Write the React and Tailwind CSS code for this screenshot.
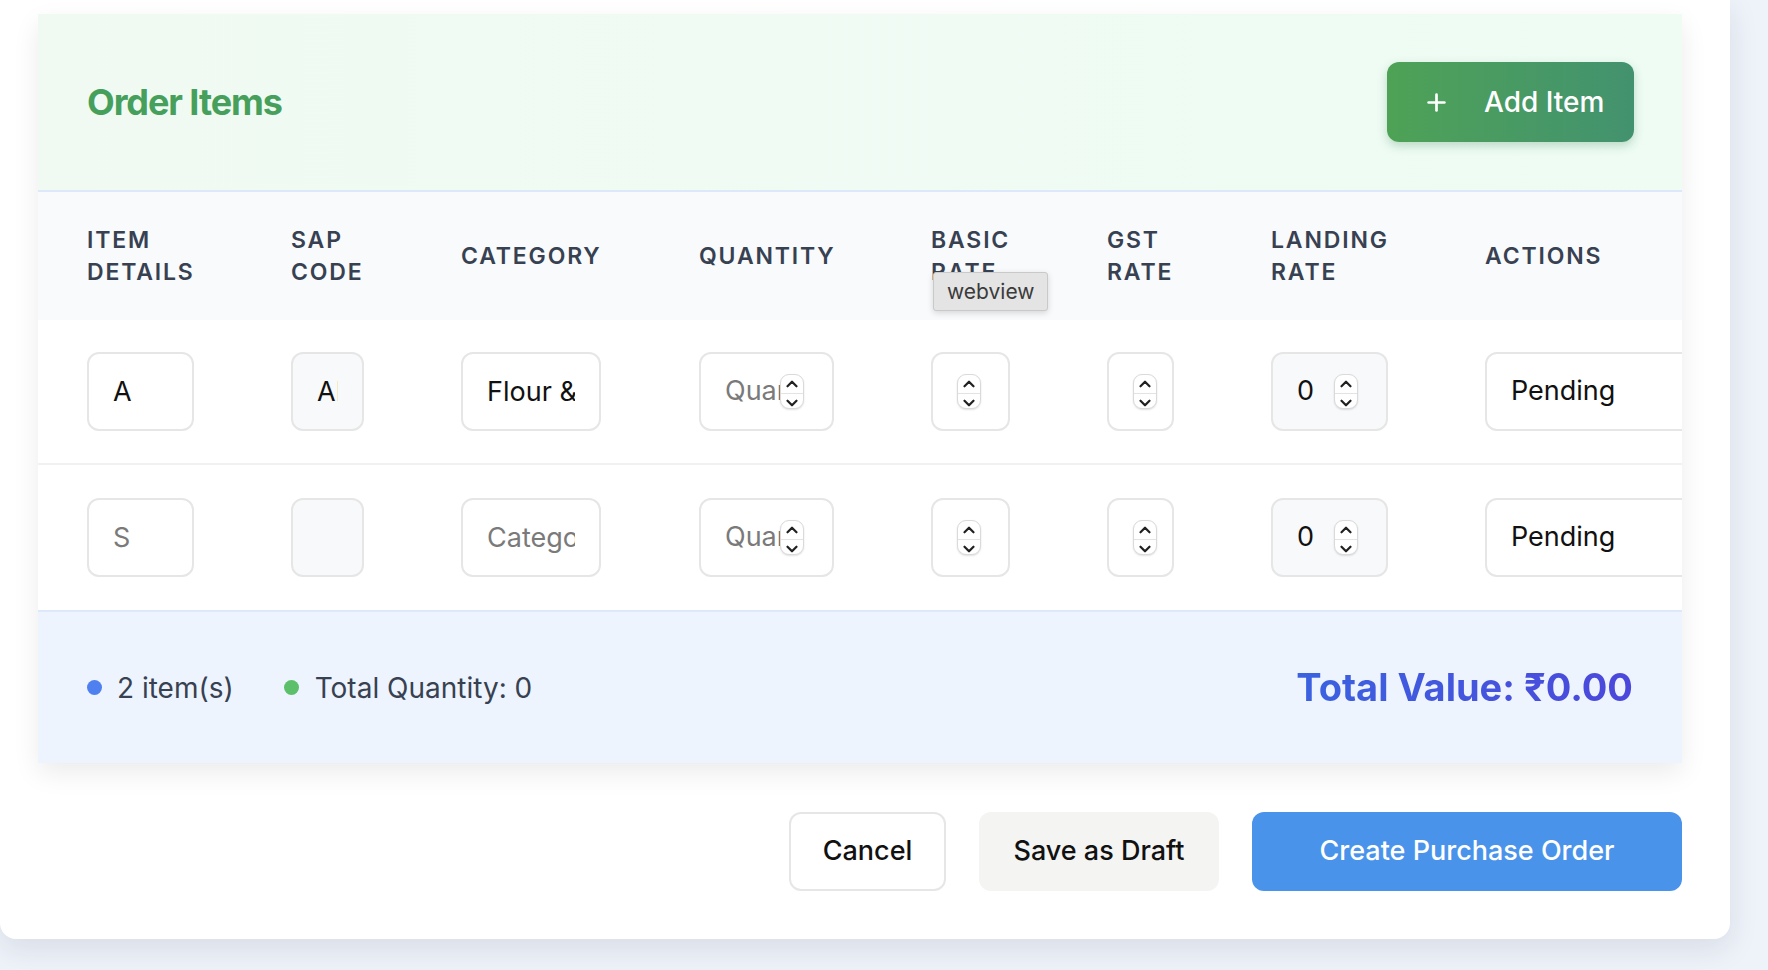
import { Plus, ChevronUp, ChevronDown } from 'lucide-react';

const headers = [
  'ITEM\nDETAILS',
  'SAP\nCODE',
  'CATEGORY',
  'QUANTITY',
  'BASIC\nRATE',
  'GST\nRATE',
  'LANDING\nRATE',
  'ACTIONS',
];

const rows = [
  { item: 'A', sap: 'AB1029', category: 'Flour & Grains', landing: '0' },
  { item: '', sap: '', category: '', landing: '0' },
];

const inputBase =
  'h-[79px] rounded-[12px] border-2 border-[#e6e6e6] px-[24px] text-[27px] text-[#111] placeholder:text-[#7a7a7a] outline-none';

function Spinner() {
  return (
    <div className="flex h-[35px] w-[24px] shrink-0 flex-col overflow-hidden rounded-[9px] border border-[#dadada] bg-white shadow-[0_1px_2px_rgba(0,0,0,0.12)]">
      <div className="flex flex-1 items-center justify-center border-b border-[#e3e3e3]">
        <ChevronUp size={18} strokeWidth={3} className="text-[#222]" />
      </div>
      <div className="flex flex-1 items-center justify-center">
        <ChevronDown size={18} strokeWidth={3} className="text-[#222]" />
      </div>
    </div>
  );
}

function NumberField({ width, value, placeholder, muted }) {
  return (
    <div
      className={`flex h-[79px] items-center rounded-[12px] border-2 border-[#e6e6e6] pl-[24px] pr-[28px] ${width} ${
        muted ? 'bg-[#f8f9fa]' : 'bg-white'
      }`}
    >
      <input
        readOnly
        value={value}
        placeholder={placeholder}
        className="w-0 min-w-0 flex-1 bg-transparent text-[27px] text-[#111] outline-none placeholder:text-[#7a7a7a]"
      />
      <Spinner />
    </div>
  );
}

const grid =
  'grid grid-cols-[204px_170px_238px_232px_176px_164px_214px_300px]';

export default function App() {
  return (
    <div className="min-h-screen bg-[#eef2f9] font-[Inter,'Liberation_Sans',sans-serif]">
      <div className="w-[1730px] rounded-b-2xl bg-white pl-[38px] pr-[48px] pt-[14px] pb-[48px] shadow-[0_10px_30px_rgba(30,41,59,0.10)]">
        {/* Order items panel */}
        <div className="overflow-hidden bg-white shadow-[0_10px_25px_rgba(0,0,0,0.08)]">
          {/* Header */}
          <div className="flex h-[178px] items-center justify-between border-b-2 border-[#dde8fa] bg-gradient-to-r from-[#f0faf3] to-[#eefcf4] pl-[49px] pr-[48px]">
            <h2 className="text-[36px] font-bold tracking-[-0.03em] text-[#46a05c]">Order Items</h2>
            <button className="flex h-[80px] w-[247px] items-center gap-[34px] rounded-[12px] bg-gradient-to-r from-[#4ea255] to-[#43926f] pl-[36px] text-[28px] font-medium text-white shadow-[0_4px_10px_rgba(34,120,60,0.25)]">
              <Plus size={27} strokeWidth={2.4} />
              Add Item
            </button>
          </div>

          {/* Table */}
          <div className="overflow-hidden">
            <div className={`${grid} h-[128px] w-max bg-[#f8fafc]`}>
              {headers.map((h, i) => (
                <div key={h} className="relative flex items-center pl-[49px]">
                  <span className="whitespace-pre-line text-[23px] font-semibold leading-[32px] tracking-[0.08em] text-[#374151]">
                    {h}
                  </span>
                  {i === 4 && (
                    <div className="absolute left-[51px] top-[80px] z-10 flex h-[39px] items-center rounded-[3px] border border-[#c9c9c9] bg-[#e4e4e4] px-[13px] text-[21px] text-[#3b3b3b] shadow-[0_2px_6px_rgba(0,0,0,0.15)]">
                      webview
                    </div>
                  )}
                </div>
              ))}
            </div>

            {rows.map((r, idx) => (
              <div
                key={idx}
                className={`${grid} h-[145px] w-max items-center ${idx === 0 ? 'border-b-2 border-[#f1f1f1]' : ''}`}
              >
                <div className="pl-[49px]">
                  <input readOnly value={r.item} placeholder="S" className={`${inputBase} w-[107px] bg-white`} />
                </div>
                <div className="pl-[49px]">
                  <input readOnly value={r.sap} className={`${inputBase} w-[73px] bg-[#f8f9fa]`} />
                </div>
                <div className="pl-[49px]">
                  <input readOnly value={r.category} placeholder="Category" className={`${inputBase} w-[140px] bg-white`} />
                </div>
                <div className="pl-[49px]">
                  <NumberField width="w-[135px]" value="" placeholder="Quantity" />
                </div>
                <div className="pl-[49px]">
                  <NumberField width="w-[79px]" value="" />
                </div>
                <div className="pl-[49px]">
                  <NumberField width="w-[67px]" value="" />
                </div>
                <div className="pl-[49px]">
                  <NumberField width="w-[117px]" value={r.landing} muted />
                </div>
                <div className="pl-[49px]">
                  <div className="flex h-[79px] w-[251px] items-center rounded-[12px] border-2 border-[#e6e6e6] bg-white px-[24px] text-[27px] text-[#111]">
                    Pending
                  </div>
                </div>
              </div>
            ))}
          </div>

          {/* Footer summary */}
          <div className="flex h-[153px] items-center justify-between border-t-2 border-[#dde8fa] bg-[#eef4fe] pl-[49px] pr-[49px]">
            <div className="flex items-center text-[28px] text-[#374151]">
              <span className="h-[15px] w-[15px] rounded-full bg-[#4f80f0]" />
              <span className="ml-[15px]">2 item(s)</span>
              <span className="ml-[50px] h-[15px] w-[15px] rounded-full bg-[#5cc06a]" />
              <span className="ml-[16px]">Total Quantity: 0</span>
            </div>
            <div className="bg-gradient-to-r from-[#3a62e0] to-[#4b47db] bg-clip-text text-[38px] font-bold text-transparent">
              Total Value: ₹0.00
            </div>
          </div>
        </div>

        {/* Actions */}
        <div className="mt-[49px] flex justify-end gap-[33px]">
          <button className="h-[79px] w-[157px] rounded-[12px] border-2 border-[#e6e6e6] bg-white text-[27px] font-medium text-[#111]">
            Cancel
          </button>
          <button className="h-[79px] w-[240px] rounded-[12px] bg-[#f4f4f3] text-[27px] font-medium text-[#111]">
            Save as Draft
          </button>
          <button className="h-[79px] w-[430px] rounded-[12px] bg-[#4a93ea] text-[27px] font-medium text-white">
            Create Purchase Order
          </button>
        </div>
      </div>
    </div>
  );
}
